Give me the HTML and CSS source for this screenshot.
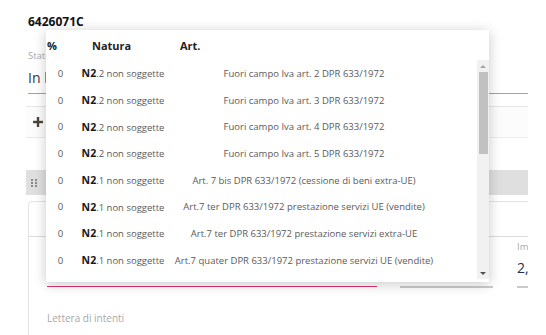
FILE: index.html
```html
<!DOCTYPE html>
<html lang="it">
<head>
    <meta charset="UTF-8">
    <title>6426071C</title>
    <link rel="stylesheet" href="styles.css">
</head>
<body>
    <div class="page">
        <h2 class="doc-code">6426071C</h2>

        <div class="field status">
            <label>Stato</label>
            <div class="value">In bozza</div>
        </div>

        <div class="toolbar">
            <svg class="plus" width="10" height="10" viewBox="0 0 10 10">
                <rect x="3.8" y="0" width="2.4" height="10" fill="#4e453b"/>
                <rect x="0" y="3.8" width="10" height="2.4" fill="#4e453b"/>
            </svg>
        </div>

        <div class="section-bar">
            <svg class="handle" width="6" height="8" viewBox="0 0 6 8">
                <rect x="0" y="0" width="2" height="2" fill="#8a8a8a"/>
                <rect x="4" y="0" width="2" height="2" fill="#8a8a8a"/>
                <rect x="0" y="3" width="2" height="2" fill="#8a8a8a"/>
                <rect x="4" y="3" width="2" height="2" fill="#8a8a8a"/>
                <rect x="0" y="6" width="2" height="2" fill="#8a8a8a"/>
                <rect x="4" y="6" width="2" height="2" fill="#8a8a8a"/>
            </svg>
        </div>

        <div class="card">
            <div class="card-head"></div>
            <div class="card-body">
                <div class="field-row">
                    <div class="field f-natura focused">
                        <label>Natura</label>
                        <div class="value"></div>
                    </div>
                    <div class="field f-mid">
                        <label>&nbsp;</label>
                        <div class="value"></div>
                    </div>
                    <div class="field f-imp">
                        <label>Importo</label>
                        <div class="value amount">2,00</div>
                    </div>
                </div>
                <div class="field lettera">
                    <label>Lettera di intenti</label>
                </div>
            </div>
        </div>

        <!-- dropdown natura IVA aperto -->
        <div class="dropdown">
            <div class="dd-head">
                <span class="h-perc">%</span>
                <span class="h-natura">Natura</span>
                <span class="h-art">Art.</span>
            </div>
            <div class="dd-body">
                <div class="dd-rows">
                    <div class="dd-row"><span>0</span><span><b>N2</b>.2 non soggette</span><span>Fuori campo Iva art. 2 DPR 633/1972</span></div>
                    <div class="dd-row"><span>0</span><span><b>N2</b>.2 non soggette</span><span>Fuori campo Iva art. 3 DPR 633/1972</span></div>
                    <div class="dd-row"><span>0</span><span><b>N2</b>.2 non soggette</span><span>Fuori campo Iva art. 4 DPR 633/1972</span></div>
                    <div class="dd-row"><span>0</span><span><b>N2</b>.2 non soggette</span><span>Fuori campo Iva art. 5 DPR 633/1972</span></div>
                    <div class="dd-row"><span>0</span><span><b>N2</b>.1 non soggette</span><span>Art. 7 bis DPR 633/1972 (cessione di beni extra-UE)</span></div>
                    <div class="dd-row"><span>0</span><span><b>N2</b>.1 non soggette</span><span>Art.7 ter DPR 633/1972 prestazione servizi UE (vendite)</span></div>
                    <div class="dd-row"><span>0</span><span><b>N2</b>.1 non soggette</span><span>Art.7 ter DPR 633/1972 prestazione servizi extra-UE</span></div>
                    <div class="dd-row"><span>0</span><span><b>N2</b>.1 non soggette</span><span>Art.7 quater DPR 633/1972 prestazione servizi UE (vendite)</span></div>
                </div>
                <div class="scrollbar">
                    <div class="sb-btn"><span class="arrow-up"></span></div>
                    <div class="sb-thumb"></div>
                    <div class="sb-track"></div>
                    <div class="sb-btn"><span class="arrow-down"></span></div>
                </div>
            </div>
        </div>
    </div>
</body>
</html>
```

FILE: styles.css
```css
body {
    margin: 0;
    background-color: #ffffff;
    font-family: 'Open Sans', sans-serif;
    color: #333;
}
.page {
    position: relative;
    width: 500px;
    height: 335px;
    padding-left: 28px;
    overflow: hidden;
}
.doc-code {
    margin: 0;
    padding-top: 14px;
    font-size: 12px;
    line-height: 16px;
    font-weight: 700;
    color: #111;
}
.field label {
    display: block;
    font-size: 9.5px;
    line-height: 12px;
    color: #a8a8a8;
    white-space: nowrap;
}
.field .value {
    font-size: 14px;
    line-height: 20px;
    white-space: nowrap;
}
.status {
    margin-top: 20px;
}
.status .value {
    margin-top: 6px;
    padding-bottom: 5px;
    border-bottom: 1px solid #a2a2a2;
    color: #3a3346;
}
.toolbar {
    margin: 12px 0 0 -2px;
    height: 30px;
    border-top: 1px solid #e6e6e6;
    border-bottom: 1px solid #ececec;
    background-color: #fcfcfc;
    display: flex;
    align-items: center;
    padding-left: 7px;
}
.section-bar {
    margin: 32px 0 0 -2px;
    height: 25px;
    background-color: #dfdfdf;
    display: flex;
    align-items: center;
    padding-left: 5px;
}
.card {
    margin-top: 6px;
    width: 540px;
    height: 140px;
    border: 1px solid #e3e3e3;
    border-radius: 4px;
}
.card-head {
    height: 34px;
    border-bottom: 1px solid #dcdcdc;
}
.card-body {
    padding: 4px 0 0 18px;
}
.field-row {
    display: flex;
    gap: 23px;
}
.field-row .field {
    flex: none;
}
.field-row .value {
    margin-top: 5px;
    height: 20px;
    padding-bottom: 8px;
    border-bottom: 2px solid #cbcbcb;
}
.f-natura {
    width: 330px;
}
.f-natura label {
    visibility: hidden;
}
.f-natura .value {
    border-bottom: 1.5px solid #e2336b;
}
.f-mid {
    width: 93px;
}
.f-imp {
    width: 60px;
    margin-left: 1px;
}
.amount {
    color: #2b2b55;
}
.lettera {
    margin-top: 24px;
}
.lettera label {
    font-size: 10px;
}

/* dropdown */
.dropdown {
    position: absolute;
    left: 46px;
    top: 30px;
    width: 443px;
    height: 252px;
    background-color: #ffffff;
    box-shadow: 0 2px 12px rgba(0, 0, 0, 0.22);
}
.dd-head {
    height: 30px;
    display: flex;
    align-items: center;
    font-size: 11px;
    font-weight: 700;
    color: #222;
}
.h-perc {
    width: 45px;
    padding-left: 1px;
}
.h-natura {
    width: 88px;
}
.dd-body {
    display: flex;
    height: 222px;
}
.dd-rows {
    flex: 1;
}
.dd-row {
    display: grid;
    grid-template-columns: 29px 96px 266px;
    height: 26.7px;
    align-items: center;
    text-align: center;
    font-size: 9.5px;
    color: #5a5a5a;
    white-space: nowrap;
}
.dd-row b {
    color: #1a1a1a;
    font-weight: 700;
    font-size: 10.5px;
}
.scrollbar {
    width: 12px;
    height: 219px;
    background-color: #f1f1f1;
    display: flex;
    flex-direction: column;
}
.sb-btn {
    height: 12px;
    display: flex;
    align-items: center;
    justify-content: center;
}
.arrow-up {
    border-left: 3px solid transparent;
    border-right: 3px solid transparent;
    border-bottom: 3px solid #a3a3a3;
}
.arrow-down {
    border-left: 3px solid transparent;
    border-right: 3px solid transparent;
    border-top: 3px solid #505050;
}
.sb-thumb {
    height: 82px;
    margin: 0 1.5px;
    background-color: #c1c1c1;
}
.sb-track {
    flex: 1;
}
```
